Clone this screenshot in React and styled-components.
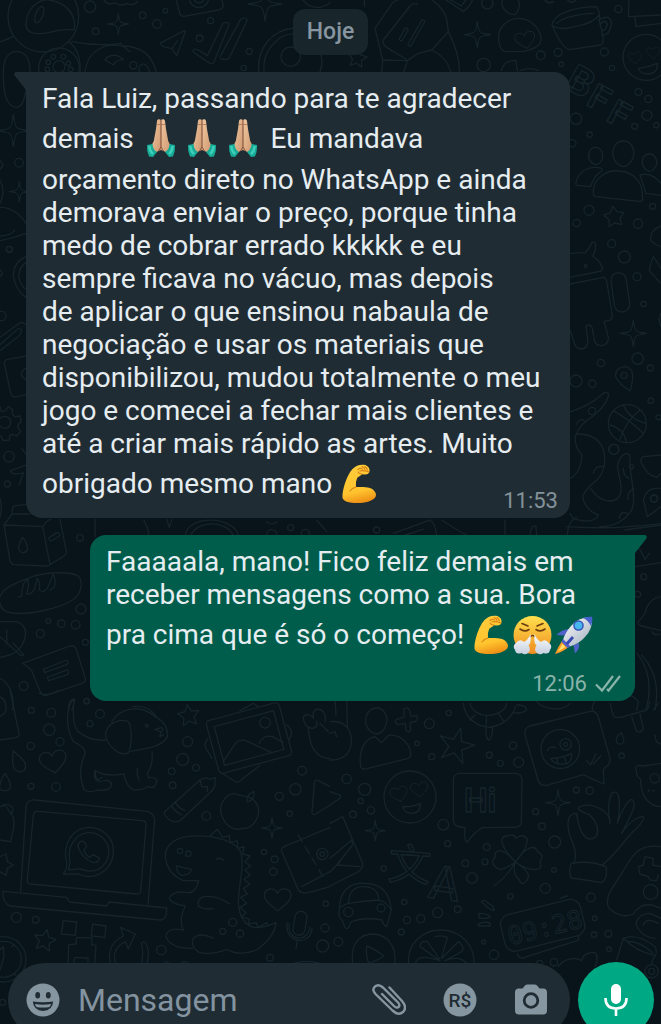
import React from "react";
import styled, { createGlobalStyle } from "styled-components";

const Global = createGlobalStyle`
  *, *::before, *::after { box-sizing: border-box; }
  html, body { margin: 0; padding: 0; background: #08131a; }
  body { font-family: Roboto, "Liberation Sans", sans-serif; }
`;

const Screen = styled.div`
  position: relative;
  height: 100vh;
  overflow: hidden;
  display: flex;
  flex-direction: column;
  isolation: isolate;
`;

const WallpaperSvg = styled.svg`
  position: absolute;
  inset: 0;
  width: 100%;
  height: 100%;
  z-index: -1;
  fill: none;
  stroke: #16242a;
  stroke-width: 4;
  stroke-linejoin: round;
  stroke-linecap: round;
`;

const Conversation = styled.main`
  flex: 1;
  min-height: 0;
  display: flex;
  flex-direction: column;
  padding-top: 9px;
`;

const DayLabel = styled.div`
  align-self: center;
  padding: 0 14px;
  line-height: 46px;
  border-radius: 12px;
  background: #18252b;
  color: #8796a0;
  font-size: 23px;
  font-weight: 500;
`;

const Bubble = styled.article`
  position: relative;
  display: grid;
  padding: 10px 12px 6px 16px;
  color: #e6edf1;
  background: ${(p) => (p.$sent ? "#005d4b" : "#202c33")};
  margin: ${(p) => (p.$sent ? "17px 26px 0 90px" : "17px 91px 0 26px")};
  border-radius: ${(p) => (p.$sent ? "16px 0 16px 16px" : "0 16px 16px 16px")};
`;

const Tail = styled.svg`
  position: absolute;
  top: 0;
  width: 12px;
  height: 18px;
  fill: ${(p) => (p.$sent ? "#005d4b" : "#202c33")};
  ${(p) => (p.$sent ? "left: 100%;" : "right: 100%;")}
`;

const MessageText = styled.p`
  grid-area: 1 / 1;
  margin: 0;
  padding-bottom: ${(p) => (p.$sent ? "36px" : "4px")};
  font-size: 28px;
  line-height: 33px;
`;

const Stamp = styled.footer`
  grid-area: 1 / 1;
  place-self: end;
  display: flex;
  align-items: center;
  gap: 8px;
  padding-right: ${(p) => (p.$sent ? "2px" : "0")};
  font-size: 22px;
  line-height: 22px;
  color: ${(p) => (p.$sent ? "#8ab3aa" : "#84929a")};
`;

const EmojiSvg = styled.svg`
  display: inline-block;
  width: 41px;
  height: 48px;
  vertical-align: -15px;
`;

const Composer = styled.form`
  display: flex;
  align-items: center;
  gap: 8px;
  margin: 0 7px -14px 8px;
`;

const Field = styled.div`
  flex: 1;
  min-width: 0;
  height: 74px;
  border-radius: 37px;
  background: #202c33;
  display: flex;
  align-items: center;
  gap: 37px;
  padding: 0 22px 0 18px;
`;

const TextInput = styled.input`
  flex: 1;
  min-width: 0;
  margin-left: -19px;
  padding: 0;
  border: 0;
  outline: 0;
  background: transparent;
  color: #e6edf1;
  font: 400 32px/40px Roboto, "Liberation Sans", sans-serif;
  &::placeholder { color: #8393a0; opacity: 1; }
`;

const IconButton = styled.button`
  flex: none;
  display: grid;
  place-items: center;
  width: 34px;
  height: 34px;
  padding: 0;
  border: 0;
  background: transparent;
  color: #8696a0;
  svg { display: block; width: 34px; height: 34px; }
`;

const MicButton = styled(IconButton)`
  width: 76px;
  height: 76px;
  border-radius: 50%;
  background: #00a884;
  color: #fff;
`;

/* ---------- wallpaper ---------- */

const Rings = ({ at }) => at.map(([x, y, r], i) => <circle key={i} cx={x} cy={y} r={r} />);

const Spark = ({ x, y, s }) => {
  const k = s * 0.22;
  return (
    <path
      d={`M${x} ${y - s}Q${x + k / 2} ${y - k} ${x + k} ${y - k}Q${x + k} ${y - k / 2} ${x + s} ${y}Q${x + k} ${y + k / 2} ${x + k} ${y + k}Q${x + k / 2} ${y + k} ${x} ${y + s}Q${x - k / 2} ${y + k} ${x - k} ${y + k}Q${x - k} ${y + k / 2} ${x - s} ${y}Q${x - k} ${y - k / 2} ${x - k} ${y - k}Q${x - k / 2} ${y - k} ${x} ${y - s}Z`}
    />
  );
};

const Star = ({ x, y, s, turn = 0, inner = 0.48 }) => {
  const pts = Array.from({ length: 10 }, (_, i) => {
    const a = ((turn - 90 + i * 36) * Math.PI) / 180;
    const r = i % 2 ? s * inner : s;
    return `${(x + r * Math.cos(a)).toFixed(1)},${(y + r * Math.sin(a)).toFixed(1)}`;
  });
  return <polygon points={pts.join(" ")} />;
};

const Heart = ({ x, y, s = 1, turn = 0 }) => (
  <path
    transform={`translate(${x} ${y}) rotate(${turn}) scale(${s})`}
    d="M0 34C-18 20-42 4-40-14C-38-34-10-38 0-18C10-38 38-34 40-14C42 4 18 20 0 34Z"
  />
);

const Tile = ({ x, y, children }) => (
  <g transform={`translate(${x} ${y}) scale(.33333)`}>{children}</g>
);

const Wallpaper = () => (
  <WallpaperSvg viewBox="0 0 661 1024" preserveAspectRatio="xMidYMid slice" aria-hidden="true">
    <Tile x={0} y={0}>
      <circle cx="130" cy="50" r="106" />
      <path d="M78 72C80 25 115-5 150 0C205 10 230 50 222 90C190 86 170 92 145 98C105 106 76 98 78 72Z" />
      <ellipse cx="118" cy="44" rx="11" ry="26" transform="rotate(22 118 44)" />
      <Rings at={[[270, 20, 17], [428, 46, 10], [471, 72, 13], [496, 32, 7], [287, 94, 10], [632, 62, 9], [599, 115, 10], [748, 154, 9], [731, 204, 8]]} />
      <Spark x={355} y={72} s={30} />
      <Spark x={795} y={12} s={50} />
      <path d="M527-5L540 42Q543 50 552 49L655 30Q671 26 669 14L664-5M312 0Q325 18 345 8Q362 22 380 10Q400 20 412 5M905-5Q925 24 955 22Q980 18 990 8" />
      <circle cx="597" cy="-6" r="29" /><circle cx="597" cy="-6" r="15" />
      <path d="M480 130L553 92Q558 92 554 100L530 167L516 146L488 139ZM516 146L533 122" />
      <path d="M578 155Q580 142 598 152L622 167L668 72Q678 62 688 72L641 188Q636 194 626 188ZM660 170L722 58Q734 48 742 60L688 174Q680 182 662 176" />
      <circle cx="872" cy="170" r="29" />
      <path d="M776 215C770 140 820 90 880 84M792 215C786 155 830 105 880 101M960 215C972 180 965 160 952 145" />
      <circle cx="177" cy="205" r="61" />
      <Rings at={[[177, 200, 18], [145, 187, 7], [160, 170, 7], [190, 170, 7], [205, 190, 7], [142, 208, 7], [212, 208, 7]]} />
      <path d="M50 155C15 155 10 190 10 220C10 270 15 320 50 322C80 320 76 250 90 215C90 180 80 155 50 155ZM205 125C235 145 242 180 240 215M0 125Q25 118 38 110M215 125Q290 140 365 130M255 215C262 150 315 128 370 138C430 140 458 170 468 215M315 180Q330 160 355 168L370 178Q345 182 340 195ZM365 135L390 155M418 215C412 190 440 180 448 215" />
      <circle cx="400" cy="196" r="11" />
      <Spark x={40} y={392} s={48} /><Spark x={58} y={575} s={30} />
      <Rings at={[[57, 488, 13], [28, 748, 9]]} />
      <path d="M0 480L10 495L0 508M0 540Q18 575 0 610M0 622C40 620 70 655 78 672M0 722Q40 715 78 700" />
    </Tile>

    <Tile x={330} y={0}>
      <path d="M135 85L188 8Q200-2 220-4L300-5Q350 30 352 70L355 95L305 150L265 160L232 182L158 180Z M160 120Q155 130 170 142L232 180M160 120L240 18Q246 8 262 12M158 180L155 215M232 182L222 215M355 95Q390 165 388 215M305 150Q350 170 362 215" />
      <rect x="216" y="82" width="10" height="42" rx="5" transform="rotate(30 221 103)" />
      <rect x="254" y="54" width="10" height="90" rx="5" transform="rotate(30 259 99)" />
      <path d="M348 0L400 34Q420 20 428-2M362 0L394 18L408 0M104 20L102 0" />
      <Spark x={442} y={104} s={40} />
      <Star x={82} y={175} s={30} turn={10} />
      <path d="M508 130C495 80 540 50 575 56C620 62 640 110 630 130C622 144 600 150 580 154L530 155Q512 154 508 130ZM517 0C510 30 540 45 555 44C570 30 570 10 565 0M515 212Q520 180 558 182L562 212M570 212Q600 200 625 212" />
      <Heart x={586} y={120} s={0.75} turn={-12} />
      <Rings at={[[472, 10, 17], [632, 166, 13], [684, 157, 12], [823, 156, 12], [865, 27, 11], [846, 204, 8], [694, 193, 7], [461, 195, 20], [925, 276, 10], [955, 297, 11], [951, 346, 15], [979, 376, 8], [914, 379, 9], [738, 356, 17], [779, 404, 8], [727, 430, 11]]} />
      <path d="M666 75C670 40 740 20 800 20Q812 40 808 62C812 90 830 125 812 135L720 149Q700 145 680 105ZM668 78Q690 92 735 80Q790 70 808 45M680 70Q705 45 790 40M805 60Q840 40 844 68Q840 110 815 104M812 72Q826 54 832 72Q826 98 814 88M897 0L895 50L990 45M915 52L918 80L993 70M645 0Q655 14 670 4M712 0Q725 12 738 0" />
      <circle cx="948" cy="172" r="69" />
      <Heart x={916} y={173} s={0.5} turn={-8} /><Heart x={970} y={158} s={0.5} turn={-8} />
      <path d="M925 205Q955 202 982 190Q984 220 955 222Q930 222 925 205Z" />
      <text x="700" y="262" fontSize="118" fontWeight="700" fontFamily="Roboto, sans-serif" transform="rotate(29 700 262)">B</text>
      <text x="765" y="312" fontSize="105" fontWeight="700" fontFamily="Roboto, sans-serif" transform="rotate(29 765 312)">F</text>
      <text x="825" y="360" fontSize="105" fontWeight="700" fontFamily="Roboto, sans-serif" transform="rotate(29 825 360)">F</text>
    </Tile>

    <Tile x={560} y={60}>
      <path d="M107 262C125 262 132 285 126 300Q118 314 107 314Q95 312 87 296C82 278 92 262 107 262ZM190 243C215 243 226 270 220 290Q210 318 190 320Q168 316 160 292C154 262 170 243 190 243ZM268 282C288 282 294 305 288 318Q280 334 268 334Q254 330 248 314C244 296 252 282 268 282Z" />
      <path d="M47 372C52 335 85 315 125 325Q130 332 115 340Q100 355 92 380L50 376ZM100 404C96 355 140 328 180 333C225 338 252 370 247 420Q246 425 238 424L106 410ZM240 345Q275 335 303 370M240 345L258 400L303 406" />
      <Rings at={[[87, 451, 15], [50, 489, 11], [278, 439, 9], [234, 491, 14], [155, 551, 12], [193, 591, 18], [231, 650, 12], [251, 732, 8], [77, 618, 4], [123, 909, 11], [233, 896, 17], [271, 924, 9], [48, 963, 18], [97, 971, 11], [192, 946, 9], [272, 1022, 8], [161, 1168, 15], [202, 1091, 57], [296, 1072, 8], [96, 1053, 11], [282, 1316, 10]]} />
      <Star x={163} y={471} s={32} turn={-8} inner={0.55} />
      <path d="M30 580L75 578Q92 560 94 550Q104 540 107 555Q108 570 98 588Q122 605 128 625Q128 634 110 636L30 652M30 672L130 652Q138 652 140 664L157 765Q158 778 146 782L132 784L145 832Q146 856 122 857Q108 856 104 844L96 802Q88 790 78 798L84 844Q82 866 64 867Q45 866 42 845L30 810" />
      <rect x="158" y="638" width="46" height="118" rx="22" transform="rotate(-8 181 697)" />
      <Spark x={220} y={820} s={40} />
      <path d="M303 498Q270 510 272 540Q285 555 303 560M280 590L303 625M280 590Q270 610 268 632L300 668M303 760Q292 778 303 800" />
      <path d="M192 920Q168 922 166 948Q174 970 210 993Q222 955 216 935Q208 920 192 920Z" />
      <path d="M160 1052Q210 1080 250 1120M180 1138Q200 1080 240 1050M150 1095Q190 1105 200 1148M190 1036Q210 1080 258 1090" />
      <path d="M30 1056Q95 1035 130 1000Q144 992 146 1005Q140 1035 100 1068Q60 1090 45 1130Q45 1165 66 1185Q62 1240 30 1255M50 1122C110 1120 140 1155 133 1215C125 1270 85 1265 68 1310Q75 1350 115 1365Q100 1395 40 1375L30 1360M92 1285C120 1330 170 1335 182 1300C190 1260 160 1225 180 1195Q200 1170 210 1188C205 1240 235 1320 212 1355Q180 1400 120 1400M190 1225Q190 1250 207 1255M222 1285Q200 1295 205 1318M100 1240Q105 1215 132 1220M20 1400Q160 1410 303 1390M48 1095Q60 1070 72 1082M178 1375Q180 1350 205 1362" />
      <path d="M303 1185L250 1190Q238 1196 245 1210Q262 1248 290 1252L303 1240M303 1285Q260 1280 250 1320L262 1370L303 1340" />
    </Tile>

    <Tile x={0} y={230}>
      <Rings at={[[27, 680, 16], [22, 762, 9], [28, 58, 9], [14, 577, 18], [4, 258, 14]]} />
      <path d="M78 80Q42 95 40 135Q45 180 78 202M78 98Q58 110 56 138Q60 165 78 178M0 322L55 282Q68 272 78 284M0 344L50 300Q60 290 64 300Q66 310 54 320L0 362M78 378L24 388Q10 390 14 404L32 490Q36 504 50 500L78 494M78 415Q62 420 65 438L78 450M0 530L4 545Q18 545 24 530L38 538Q34 552 44 560L60 558L64 575Q52 582 54 592L62 605L50 618Q40 610 30 616L28 630L10 632Q6 620 0 618M32 722L76 706M32 722Q36 738 70 728L58 764M66 656L78 672M0 120L8 130L0 140M0 18Q36 16 44 0" />
    </Tile>

    <Tile x={0} y={440}>
      <path d="M0 175Q8 200 0 232M35 225L38 205Q40 196 50 196L78 194M12 255L36 222L90 222M12 255L128 260L150 374Q146 380 136 378L42 374Q32 372 30 362ZM128 260Q140 240 152 238M180 238L199 334Q200 342 192 348L150 374M68 292Q52 318 58 332Q70 346 82 330Q84 312 68 292Z" />
      <rect x="146" y="284" width="34" height="12" rx="2" transform="rotate(-32 163 290)" />
      <Rings at={[[240, 293, 10], [145, 543, 7], [184, 551, 11], [227, 554, 13], [243, 507, 15], [121, 581, 12], [256, 607, 9], [71, 738, 13], [260, 783, 8], [872, 263, 9], [815, 285, 16], [916, 280, 12]]} />
      <path d="M0 470C10 440 60 425 90 412C140 395 200 395 230 405C252 420 245 455 225 475C180 510 60 530 20 515Q0 505 0 490M55 470Q68 475 66 450Q72 418 84 420Q88 440 80 462Q96 465 104 445L112 414M112 414Q122 430 118 450Q130 460 142 445L160 402Q170 425 162 442Q152 448 150 450" />
      <path d="M0 545L50 545Q80 555 76 585Q70 630 30 645L0 652M0 590L60 645Q75 650 68 640L40 610M20 570L20 612" />
      <path d="M68 670L210 618Q222 615 228 625L256 715Q258 725 246 730L140 766Q128 768 122 758L94 690ZM130 688L200 660Q208 668 200 674L134 698ZM142 712L202 690Q210 696 202 704L146 722Z" />
      <path d="M0 715C30 730 45 770 38 810M205 810Q205 780 222 776Q222 800 215 810M285 238L285 290M432 242Q448 270 445 287M500 238L508 262L515 238M556 287C560 225 700 225 716 287M572 287C590 240 680 240 700 287M800 245Q815 260 830 245M950 240L980 275" />
    </Tile>

    <Tile x={330} y={440}>
      <Rings at={[[852, 28, 15], [905, 80, 6], [941, 410, 9], [923, 463, 9], [140, 270, 9], [972, 175, 11]]} />
      <path d="M190 280L300 240Q315 250 320 285M225 285L280 268M335 240Q380 270 410 285M525 240L525 285M600 285Q605 250 618 260L620 285M712 285Q715 240 740 232M885 270L993 255M925 320L945 358L958 340M915 380L993 368M993 470Q955 475 945 520L925 545Q922 555 935 558L993 572M965 575Q975 590 990 582M922 640C960 690 965 750 948 810M935 645C985 700 985 760 975 810M880 765Q905 760 925 785L920 810M800 775Q780 805 790 810" />
    </Tile>

    <Tile x={0} y={690}>
      <Rings at={[[94, 61, 9], [154, 68, 13], [148, 119, 17], [180, 155, 12], [92, 168, 11], [93, 289, 9], [168, 291, 13], [300, 72, 13], [270, 101, 9], [260, 34, 8], [563, 155, 15], [548, 208, 18], [515, 244, 10], [588, 233, 10], [518, 286, 10], [619, 378, 13], [906, 242, 13], [886, 298, 17], [838, 319, 12], [869, 371, 8], [792, 486, 8], [824, 508, 10], [820, 545, 11], [49, 682, 15], [107, 689, 10], [484, 780, 14], [698, 697, 12], [668, 724, 9], [720, 731, 11], [810, 803, 10], [977, 641, 8], [975, 714, 12], [968, 768, 18], [8, 937, 9], [440, 107, 4]]} />
      <path d="M0 20Q20 30 18 60Q12 75 0 78M30 0L57 130Q58 140 48 143L0 150M118 10Q145 20 175 0" />
      <path d="M40 182Q35 215 42 235Q58 254 74 240Q82 222 66 206ZM15 250Q-5 280 0 298Q18 308 30 296Q34 275 15 250Z" />
      <Heart x={160} y={215} turn={-10} />
      <path d="M222 32Q230 24 216 32C200 60 195 110 220 155Q265 175 252 200Q232 245 252 300Q272 310 292 300Q335 305 334 280Q325 265 300 276Q285 270 286 242Q320 262 372 252Q376 285 400 300Q430 300 442 290Q470 300 470 270Q460 258 446 264L442 250Q460 225 456 185M222 32Q215 100 232 122Q270 155 316 150M316 135C320 95 365 85 385 95C398 115 395 170 385 188Q365 198 345 180Q320 160 316 135ZM335 95C360 55 420 40 465 80Q505 100 502 140Q490 162 455 172L392 184M400 50Q440 42 470 80M465 118L485 112Q492 118 484 126ZM482 126L480 140L490 134M284 242Q280 262 290 272L306 262M412 235Q410 260 418 270" />
      <Star x={566} y={77} s={34} turn={-8} /><Star x={134} y={752} s={34} turn={12} />
      <rect x="634" y="62" width="226" height="164" rx="12" transform="rotate(-15 747 144)" />
      <rect x="655" y="84" width="184" height="120" transform="rotate(-15 747 144)" />
      <circle cx="795" cy="98" r="16" />
      <path d="M670 214L708 158Q724 145 742 154L816 188M778 160Q790 132 818 140L850 158M624 145Q612 160 616 172L636 205M660 246L708 276Q718 278 726 268L780 226M720 62L760 40L775 50M860 105Q880 120 872 140L866 150" />
      <path d="M910 80Q925 65 940 85Q935 50 965 60Q980 75 975 95M910 80Q910 110 935 115Q955 115 950 95M925 115C928 165 945 205 990 205M960 100L985 125" />
      <path d="M494 365L600 270Q615 260 630 268L646 262L644 280Q650 290 628 310L540 392Q525 400 510 390Q488 375 494 365ZM515 345Q520 362 545 375M600 270L605 290L622 290L622 305M525 335Q535 355 555 362" />
      <path d="M718 315C680 300 660 340 662 365C670 405 700 425 725 415C760 420 785 375 772 345C760 318 735 320 718 315ZM742 335Q738 315 762 304Q765 325 746 335" />
      <path d="M990 290L955 272Q944 266 943 280L936 366Q936 378 947 372L990 345" />
      <Spark x={816} y={414} s={30} />
      <path d="M62 604L78 350Q82 328 105 330L440 364Q462 368 464 390L444 642M82 570L100 375Q102 362 116 364L428 392Q440 394 438 406L422 605Q420 614 408 612L92 582Q80 580 82 570ZM8 604L200 622L208 636L320 648L328 636L500 654Q502 690 480 690L30 648Q8 640 8 604Z" />
      <path d="M190 552Q202 535 200 520C185 460 220 412 268 412C310 412 345 448 340 490C335 540 285 575 235 552L190 552ZM206 535Q212 520 208 500C205 460 235 426 272 428C310 432 330 465 326 492C320 535 280 555 240 536L206 540ZM242 454Q228 462 238 480Q252 508 280 518Q298 518 298 504L280 494L268 502Q256 494 252 480L260 468Q252 450 242 454Z" />
      <path d="M496 500C496 450 550 430 630 440Q700 450 722 485C735 530 715 580 715 640Q720 700 760 712Q790 715 828 698Q825 740 770 780Q720 800 680 778Q640 795 598 788Q570 770 580 745Q600 725 640 745M496 500Q500 550 550 572L596 572Q588 612 560 608Q520 600 508 625Q510 640 556 648Q535 690 550 720Q500 710 498 740Q510 775 578 775M530 528L575 538Q570 555 545 556Q530 550 530 528ZM690 642Q650 615 610 620Q590 630 596 648Q610 660 640 656M630 438L652 418L668 442L688 436L690 458L712 452L714 475L732 470L728 492L750 498L735 515L752 528L735 540L750 555L732 568L750 582L730 596L742 612L722 622L740 640L720 652L738 668L724 680L748 688L745 702L768 698L775 712L800 698L805 708" />
      <Rings at={[[540, 483, 8], [565, 491, 8]]} />
      <path d="M650 508Q662 500 672 512" />
      <path d="M0 350Q20 340 25 360Q48 380 40 420Q35 435 32 455L0 450M5 350Q15 335 35 350Q45 362 30 372M0 500L18 492L22 515L40 525L22 535L18 556L0 545" />
      <path d="M990 412L852 470Q840 476 846 486L895 600Q905 612 925 608L990 590M905 590L990 545" />
      <path d="M895 435L975 570" strokeDasharray="24 16" />
      <circle cx="967" cy="492" r="17" /><circle cx="967" cy="492" r="7" />
      <Heart x={833} y={628} />
      <rect x="882" y="664" width="36" height="72" rx="18" transform="rotate(10 900 700)" />
      <path d="M862 700C850 755 930 775 936 715M892 752L888 776M868 700Q862 740 900 745Q925 740 930 712" />
      <circle cx="10" cy="808" r="68" /><circle cx="10" cy="808" r="54" />
      <path d="M0 780L10 770L12 800L0 840M35 770L42 764M40 850L48 856M190 692L230 696L226 736L184 732ZM278 702L318 708L314 742L274 738ZM230 742L276 744L275 764L288 766L284 825M230 742L228 762L206 764L204 825M222 820L224 802L264 804L264 822" />
      <path d="M362 712L406 732L385 776L376 755C345 770 335 800 350 825M362 712L370 738C320 760 325 810 335 830M424 760Q435 750 440 765Q450 790 440 825M424 760Q432 790 424 825M490 822Q500 808 508 822M540 822Q552 808 568 822M880 820Q925 808 960 820" />
    </Tile>

    <Tile x={330} y={690}>
      <path d="M140 54C162 54 174 78 170 98Q162 130 140 132Q118 128 108 104C102 76 118 54 140 54ZM92 232C85 180 105 145 135 140L155 158L175 136C210 132 240 160 242 190Q244 202 232 206L102 238ZM50 20L52 110M0 95C45 90 65 120 64 155C62 190 40 210 0 210M0 130L15 125L20 140M15 20L18 75" />
      <path d="M222 56Q238 50 240 66L243 80L258 76Q268 86 256 94L240 98L242 120Q236 132 228 120L226 100L204 104Q190 96 200 88L222 82Z" />
      <Star x={378} y={168} s={56} turn={15} inner={0.38} />
      <path d="M400 40C405 85 440 110 480 112C520 105 550 80 556 50M420 40C425 65 450 75 470 76C500 76 530 60 530 40M435 75L420 90M470 78L468 108Q466 150 478 150Q488 140 488 112M505 70L520 92M560 45Q590 45 590 60Q575 72 552 68M620 35C640 60 700 65 720 40M840 40L850 78Q860 86 880 80L950 60Q960 50 958 35M905 80L918 120Q930 135 940 115L930 72M970 60L985 40" />
      <Rings at={[[356, 69, 8], [298, 101, 15], [261, 160, 7], [305, 200, 9], [549, 167, 11], [566, 217, 15], [511, 220, 9], [478, 195, 9], [50, 267, 14], [104, 298, 18], [92, 333, 8], [123, 361, 11], [69, 373, 10], [340, 404, 16], [353, 461, 9], [406, 520, 10], [470, 471, 10], [465, 515, 9], [426, 564, 16], [161, 535, 8], [617, 365, 9], [636, 409, 10], [674, 456, 18], [672, 540, 7], [646, 595, 15], [541, 619, 8], [739, 300, 9], [779, 302, 11], [875, 197, 8], [783, 622, 13], [794, 685, 7], [792, 734, 8], [835, 731, 10], [837, 778, 7], [223, 636, 8], [323, 668, 15], [383, 658, 10], [231, 690, 11], [272, 686, 12], [214, 726, 9], [25, 755, 13], [492, 794, 14], [461, 756, 6], [672, 817, 11], [629, 820, 9], [691, 177, 58], [707, 163, 17], [707, 163, 6], [240, 321, 78], [962, 606, 22], [974, 265, 14], [965, 844, 20], [965, 844, 9]]} />
      <path d="M585 135Q582 115 600 108L780 64Q798 62 804 78L840 205Q842 222 826 232L820 240L822 282Q790 270 760 254L650 286Q630 288 624 270ZM652 182Q660 165 678 174M662 205Q695 205 725 190Q728 222 700 222Q670 224 662 205ZM680 206L684 220M704 202L708 218M770 212L782 224L798 192M790 222L812 198" />
      <path d="M875 128Q855 140 860 158Q872 168 882 155ZM975 135Q975 160 993 162M918 240Q912 222 940 228L993 220M918 240Q920 262 932 268C930 320 960 350 993 350M955 300L958 304M968 300L972 304" />
      <Heart x={207} y={312} s={0.65} turn={-14} /><Heart x={268} y={298} s={0.65} turn={-8} />
      <path d="M218 350Q248 352 270 340Q274 368 245 370Q224 370 218 350Z" />
      <path d="M388 250L556 250Q576 252 576 270L574 394Q574 412 556 412L458 413Q435 425 412 456Q402 456 405 412Q370 412 370 390L370 270Q370 252 388 250Z" />
      <text x="402" y="366" fontSize="100" fontWeight="700" fontFamily="Roboto, sans-serif">Hi</text>
      <Spark x={684} y={338} s={38} /><Spark x={136} y={422} s={30} />
      <path d="M0 305L30 315Q34 320 28 326L0 345M0 400L38 380L98 520Q100 535 85 545L0 588M0 505L65 450L68 465L20 525L90 530M0 545L30 515" />
      <text x="172" y="566" fontSize="128" fontWeight="400" fontFamily="'Noto Sans CJK SC', sans-serif" transform="rotate(4 172 566)">文</text>
      <text x="292" y="622" fontSize="140" fontWeight="500" fontFamily="Roboto, sans-serif" transform="rotate(8 292 622)">A</text>
      <path d="M556 516C520 480 500 440 530 438Q555 430 558 445Q580 428 592 448Q590 480 556 516ZM556 516C590 465 620 465 622 485Q645 495 630 515Q640 540 615 538Q590 540 556 516ZM556 516C600 545 600 560 590 572Q575 590 568 570Q545 550 556 516ZM556 516C520 470 490 478 496 500Q480 515 496 530Q510 550 556 516ZM554 520Q530 560 492 588" />
      <path d="M732 518Q745 490 720 440C705 385 720 370 740 370Q745 420 765 440Q780 455 800 438Q812 410 780 375Q740 360 745 352Q780 335 820 362Q842 380 840 400Q830 340 845 310Q860 300 866 318Q872 350 862 400Q885 335 905 328Q920 335 905 370L875 430Q910 380 940 380Q945 390 920 415C880 450 880 470 818 524M724 520Q780 510 828 530Q835 565 815 578Q770 570 724 564Q714 545 724 520Z" />
      <path d="M993 470Q930 460 900 510L840 605Q820 650 850 665Q880 685 910 672Q930 640 965 645L993 655M945 500L970 505L968 525L993 530M945 500L940 525L925 530L930 552L955 560L960 570L980 572L985 555M918 700Q925 670 960 670L993 685M918 700Q930 740 975 745M940 705Q950 680 985 700" />
      <path d="M28 655C30 600 60 578 105 580C150 582 178 600 184 660L170 710Q160 705 156 690Q100 680 62 696Q58 720 46 714L36 690Q22 680 28 655ZM56 640C55 600 80 588 105 590C135 592 146 610 146 630Q100 632 56 640ZM28 655Q45 640 60 640M146 632Q165 630 184 660" />
      <Rings at={[[55, 666, 14], [153, 654, 12]]} />
      <path d="M68 820C60 760 90 732 130 732C175 735 200 770 194 820M110 768Q130 775 162 798Q140 812 116 820Q106 790 110 768Z" />
      <path d="M236 820C230 760 280 718 335 720C395 722 435 770 432 820M256 820C262 795 290 800 330 812L270 770Q270 752 292 755L328 806M316 740Q335 734 352 742L334 806L385 755Q405 768 396 785L345 812Q390 795 410 820" />
      <path d="M455 635Q460 625 475 640Q495 650 492 662Q470 655 455 635ZM446 670Q470 670 482 680Q470 688 448 684ZM446 708Q440 698 470 696Q485 700 480 708Z" />
      <rect x="515" y="650" width="246" height="112" rx="30" transform="rotate(-14 638 706)" />
      <text x="540" y="766" fontSize="76" strokeWidth="3" fontFamily="'DejaVu Sans Mono', monospace" transform="rotate(-14 540 766)">09:28</text>
      <path d="M562 792L568 802Q575 808 590 800L742 752Q750 748 744 738M690 625L712 618" />
      <path d="M685 830C700 805 735 800 755 812Q760 785 795 788Q808 800 795 830M860 810L880 745Q920 728 975 770Q985 790 970 805L965 820M880 745Q920 785 970 795M890 755Q925 750 968 788" />
    </Tile>
  </WallpaperSvg>
);

/* ---------- emoji ---------- */

const PrayingHands = () => (
  <EmojiSvg viewBox="1 0 41 48" role="img" aria-label="mãos em oração">
    <defs>
      <linearGradient id="skin" x1="0" x2="1" y1="0" y2="1">
        <stop offset="0" stopColor="#f0c8a0" />
        <stop offset="1" stopColor="#cf9770" />
      </linearGradient>
    </defs>
    <path fill="url(#skin)" d="M20.900 5C19.500 3.800 17.300 4 17 6L16 14L13.800 26L11.500 30.500L14 38L20.900 35Z" />
    <path fill="url(#skin)" d="M21.100 5C22.500 3.800 24.700 4 25 6L26 14L28.200 26L30.500 30.500L28 38L21.100 35Z" />
    <path fill="none" stroke="#8a553c" strokeWidth="1" d="M21 5V32L18.500 36M21 32L23.500 36" />
    <path fill="none" stroke="#a8714f" strokeWidth=".8" d="M17 9.500L25 9.500" />
    <path fill="#17ab98" d="M7 30L12.500 29Q13 35 17 37L13 42L9 41.500Q6.500 36 7 30Z" />
    <path fill="#17ab98" d="M35 30L29.500 29Q29 35 25 37L29 42L33 41.500Q35.500 36 35 30Z" />
    <path fill="none" stroke="#3fd0ba" strokeWidth="2.500" d="M9.500 31Q9.500 36 13 39M32.500 31Q32.500 36 29 39" />
  </EmojiSvg>
);

const FlexedArm = () => (
  <EmojiSvg viewBox="1 -1 41 48" role="img" aria-label="bíceps">
    <defs>
      <linearGradient id="arm" x1=".3" x2=".5" y1="0" y2="1">
        <stop offset="0" stopColor="#ffcc3b" />
        <stop offset=".7" stopColor="#ffc42e" />
        <stop offset="1" stopColor="#ee8f16" />
      </linearGradient>
    </defs>
    <path fill="url(#arm)" d="M14.500 8C18 4 23 3 27.500 4Q32 6 31.500 10Q31 13.500 27 13.500L24 13.200Q21 16 19.500 16.500Q17.500 20 18 26C22 26 27 25.500 32 27C37 29 39 33 37.500 36C34 41 25 42.500 16 42Q7 41.500 5 38C3 33 8 15 14.500 8Z" />
    <path fill="none" stroke="#d98218" strokeWidth="1.100" strokeLinecap="round" d="M20 8.500Q22 6.500 24.500 8M24 5.500Q26 6 27 8.500M27 5.500Q29 7 29.500 9M22 10Q25 9 31 11M18 26Q14 27 12 30M20 11Q21 13 24 13" />
  </EmojiSvg>
);

const SteamFace = () => (
  <EmojiSvg viewBox="0 -1 41 48" role="img" aria-label="rosto bufando">
    <defs>
      <linearGradient id="face" x2="0" y2="1">
        <stop offset="0" stopColor="#ffe04e" />
        <stop offset="1" stopColor="#ef8d20" />
      </linearGradient>
      <linearGradient id="steam" x2="0" y2="1">
        <stop offset="0" stopColor="#fff" />
        <stop offset="1" stopColor="#c4cfdf" />
      </linearGradient>
    </defs>
    <circle cx="20.500" cy="23" r="19" fill="url(#face)" />
    <path fill="none" stroke="#6a3b0d" strokeWidth="1.600" strokeLinecap="round" d="M10 11.500L16 14M31 11.500L25 14M8 17Q12.500 20.500 17 17.500M33 17Q28.500 20.500 24 17.500M18 25Q20.500 22 23 25" />
    <path fill="url(#steam)" d="M18.500 22Q19.500 32 16.500 33Q19.500 38 16 41Q13 43.500 9.500 41Q4 43 3 38Q0 34 4 31Q8 26 12 30Q16 28 18.500 22ZM22.500 22Q21.500 32 24.500 33Q21.500 38 25 41Q28 43.500 31.500 41Q37 43 38 38Q41 34 37 31Q33 26 29 30Q25 28 22.500 22Z" />
  </EmojiSvg>
);

const Rocket = () => (
  <EmojiSvg viewBox="0 -1 41 48" role="img" aria-label="foguete">
    <defs>
      <linearGradient id="hull" x1="0" x2="1" y1="0" y2="1">
        <stop offset="0" stopColor="#fff" />
        <stop offset="1" stopColor="#9eabbb" />
      </linearGradient>
    </defs>
    <path fill="#5062c8" d="M17 17Q9 17 3.500 23L12 23.500L14 27ZM26 31Q27 37 22 41.500L20.500 33Z" />
    <path fill="#ff9b25" d="M9 29Q5 35 2 42Q10 40 15.500 35Z" />
    <path fill="#ffe16b" d="M9.500 32L5 39.500L12.500 35Z" />
    <path fill="url(#hull)" d="M39 5Q25 5 18 14Q12 21 10 28L16.500 34.500Q26 32 32 25Q40 17 39 5Z" />
    <path fill="#4561cb" d="M39.200 4.800Q34 4.500 30 6Q35 8 38 14Q40 9 39.200 4.800Z" />
    <path fill="#5062c8" d="M10 27L8.500 30L14.500 36L17.500 34.500Z" />
    <circle cx="25.500" cy="13.500" r="5.300" fill="#3555bb" />
    <circle cx="25.500" cy="13.500" r="3.800" fill="#47b6ed" />
    <path fill="#3849b1" d="M19 24L21 26L15 33L12.500 31Z" />
  </EmojiSvg>
);

/* ---------- icons ---------- */

const Ticks = () => (
  <svg width="26" height="18" viewBox="0 0 26 18" fill="none" stroke="currentColor" strokeWidth="2.200" role="img" aria-label="entregue">
    <path d="M1 9.500L7 15.500L18 1M12 14L13.500 15.500L25 1" />
  </svg>
);

const SmileyIcon = () => (
  <svg viewBox="0 0 34 34" aria-hidden="true">
    <circle cx="17" cy="17" r="16.500" fill="currentColor" />
    <g fill="#202c33">
      <ellipse cx="11.700" cy="12.300" rx="2.400" ry="3.200" />
      <ellipse cx="22.300" cy="12.300" rx="2.400" ry="3.200" />
      <path d="M6.800 18.500Q17 20 27.200 18.500Q26.500 27.500 17 28Q7.500 27.500 6.800 18.500Z" />
    </g>
    <path fill="currentColor" d="M9 21Q17 22.300 25 21Q24.500 23 23.500 24Q17 25 10.500 24Q9.500 23 9 21Z" />
  </svg>
);

const ClipIcon = () => (
  <svg viewBox="0 0 34 34" fill="none" stroke="currentColor" strokeWidth="2.400" strokeLinecap="round" strokeLinejoin="round" aria-hidden="true">
    <path d="M17.500 4.500L30 18Q35.500 24.500 31 29Q26.500 33 20.500 27.500L3.500 11Q-.5 6.500 3 3.500Q6.500 .5 11 4.500L26 19.500Q28.500 22.500 26.500 24Q24.500 25.500 22 23L10 11" />
  </svg>
);

const MoneyIcon = () => (
  <svg viewBox="0 0 34 34" aria-hidden="true">
    <circle cx="17" cy="17" r="16.500" fill="currentColor" />
    <text x="17" y="24" textAnchor="middle" fill="#202c33" fontFamily="Roboto, sans-serif" fontSize="19" fontWeight="500">R$</text>
  </svg>
);

const CameraIcon = () => (
  <svg viewBox="0 0 34 34" aria-hidden="true">
    <path fill="currentColor" d="M11 2.500Q12 1.500 13.500 1.500H20.500Q22 1.500 23 2.500L25.500 5.500H29Q33 5.500 33 9.500V27.500Q33 31.500 29 31.500H5Q1 31.500 1 27.500V9.500Q1 5.500 5 5.500H8.500Z" />
    <circle cx="17" cy="17.500" r="6.800" fill="none" stroke="#202c33" strokeWidth="2.800" />
  </svg>
);

const MicIcon = () => (
  <svg viewBox="0 0 34 34" aria-hidden="true">
    <rect x="12" y="1" width="10" height="20" rx="5" fill="currentColor" />
    <path d="M6.500 15Q6.500 25.500 17 25.500Q27.500 25.500 27.500 15M17 25.500V33" fill="none" stroke="currentColor" strokeWidth="2.600" />
  </svg>
);

/* ---------- page ---------- */

export default function App() {
  return (
    <Screen>
      <Global />
      <Wallpaper />
      <Conversation>
        <DayLabel>Hoje</DayLabel>

        <Bubble>
          <Tail viewBox="0 0 12 18" aria-hidden="true">
            <path d="M12 0H2Q-1 1 1 4L12 18Z" />
          </Tail>
          <MessageText>
            Fala Luiz, passando para te agradecer<br />
            demais <PrayingHands /><PrayingHands /><PrayingHands /> Eu mandava<br />
            orçamento direto no WhatsApp e ainda<br />
            demorava enviar o preço, porque tinha<br />
            medo de cobrar errado kkkkk e eu<br />
            sempre ficava no vácuo, mas depois<br />
            de aplicar o que ensinou nabaula de<br />
            negociação e usar os materiais que<br />
            disponibilizou, mudou totalmente o meu<br />
            jogo e comecei a fechar mais clientes e<br />
            até a criar mais rápido as artes. Muito<br />
            obrigado mesmo mano <FlexedArm />
          </MessageText>
          <Stamp><time>11:53</time></Stamp>
        </Bubble>

        <Bubble $sent>
          <Tail $sent viewBox="0 0 12 18" aria-hidden="true">
            <path d="M0 0H10Q13 1 11 4L0 18Z" />
          </Tail>
          <MessageText $sent>
            Faaaaala, mano! Fico feliz demais em<br />
            receber mensagens como a sua. Bora<br />
            pra cima que é só o começo! <FlexedArm /><SteamFace /><Rocket />
          </MessageText>
          <Stamp $sent><time>12:06</time><Ticks /></Stamp>
        </Bubble>
      </Conversation>

      <Composer onSubmit={(e) => e.preventDefault()}>
        <Field>
          <IconButton type="button" aria-label="Emoji"><SmileyIcon /></IconButton>
          <TextInput type="text" placeholder="Mensagem" aria-label="Mensagem" />
          <IconButton type="button" aria-label="Anexar"><ClipIcon /></IconButton>
          <IconButton type="button" aria-label="Pagamento"><MoneyIcon /></IconButton>
          <IconButton type="button" aria-label="Câmera"><CameraIcon /></IconButton>
        </Field>
        <MicButton type="button" aria-label="Gravar áudio"><MicIcon /></MicButton>
      </Composer>
    </Screen>
  );
}
